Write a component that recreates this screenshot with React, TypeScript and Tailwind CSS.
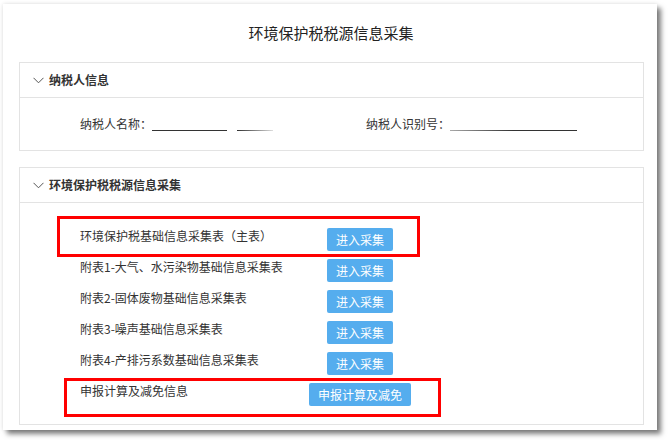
import React from "react";

const rows = [
  { label: "环境保护税基础信息采集表（主表）", action: "进入采集" },
  { label: "附表1-大气、水污染物基础信息采集表", action: "进入采集" },
  { label: "附表2-固体废物基础信息采集表", action: "进入采集" },
  { label: "附表3-噪声基础信息采集表", action: "进入采集" },
  { label: "附表4-产排污系数基础信息采集表", action: "进入采集" },
  { label: "申报计算及减免信息", action: "申报计算及减免" },
];

function Chevron() {
  return (
    <svg width="11" height="7" viewBox="0 0 11 7" className="shrink-0">
      <polyline points="0.5,0.8 5.5,5.8 10.5,0.8" fill="none" stroke="#555" strokeWidth="1" />
    </svg>
  );
}

function PanelHeader({ title }: { title: string }) {
  return (
    <div className="h-[35px] flex items-center gap-[5px] pl-[13px] border-b border-[#e3e3e3]">
      <Chevron />
      <span className="text-[12px] font-bold text-[#333] leading-[18px]">{title}</span>
    </div>
  );
}

export default function App() {
  return (
    <div
      className="w-[668px] h-[440px] bg-white pt-[4px] pl-[3px] overflow-hidden"
      style={{ fontFamily: '"Microsoft YaHei", "Noto Sans CJK SC", sans-serif' }}
    >
      <div className="w-[654px] h-[426px] bg-white shadow-[4px_4px_5px_rgba(0,0,0,0.5),0_0_4px_rgba(0,0,0,0.12)]">
        {/* Title */}
        <div className="h-[58px] flex items-center justify-center">
          <h1 className="text-[15px] text-[#222] leading-[20px] ml-[2px]">环境保护税税源信息采集</h1>
        </div>

        {/* Taxpayer info */}
        <div className="ml-[16px] w-[625px] border border-[#e3e3e3]">
          <PanelHeader title="纳税人信息" />
          <div className="h-[52px] flex items-center pl-[60px] text-[12px] text-[#333] leading-[18px]">
            <div className="w-[286px] flex items-center">
              <span>纳税人名称：</span>
              <span className="flex items-end h-[14px] gap-[10px]">
                <span className="block w-[75px] h-[1px] bg-[#333]" />
                <span className="block w-[36px] h-[1px] bg-gradient-to-r from-[#333] to-[#ddd]" />
              </span>
            </div>
            <div className="flex items-center">
              <span>纳税人识别号：</span>
              <span className="flex items-end h-[14px]">
                <span className="block w-[127px] h-[1px] bg-gradient-to-r from-[#aaa] via-[#333] to-[#333]" />
              </span>
            </div>
          </div>
        </div>

        {/* Collection forms */}
        <div className="ml-[16px] mt-[16px] w-[625px] border border-[#e3e3e3]">
          <PanelHeader title="环境保护税税源信息采集" />
          <div className="pt-[21px] pb-[14px] pl-[60px]">
            <div className="relative">
              {rows.map((r) => (
                <div key={r.label} className="grid grid-cols-[227px_106px] items-center h-[31px]">
                  <span className="text-[12px] text-[#333] leading-[18px] pb-[7px] whitespace-nowrap">{r.label}</span>
                  <div className="flex justify-center">
                    <button className="h-[23px] px-[9px] rounded-[2px] bg-[#55adee] text-white text-[12px] leading-[23px]">
                      {r.action}
                    </button>
                  </div>
                </div>
              ))}
              {/* annotation boxes */}
              <div className="absolute left-[-23px] top-[-8px] w-[363px] h-[41px] border-[3px] border-[#f00] pointer-events-none" />
              <div className="absolute left-[-16px] top-[154px] w-[377px] h-[39px] border-[3px] border-[#f00] pointer-events-none" />
            </div>
          </div>
        </div>
      </div>
    </div>
  );
}
